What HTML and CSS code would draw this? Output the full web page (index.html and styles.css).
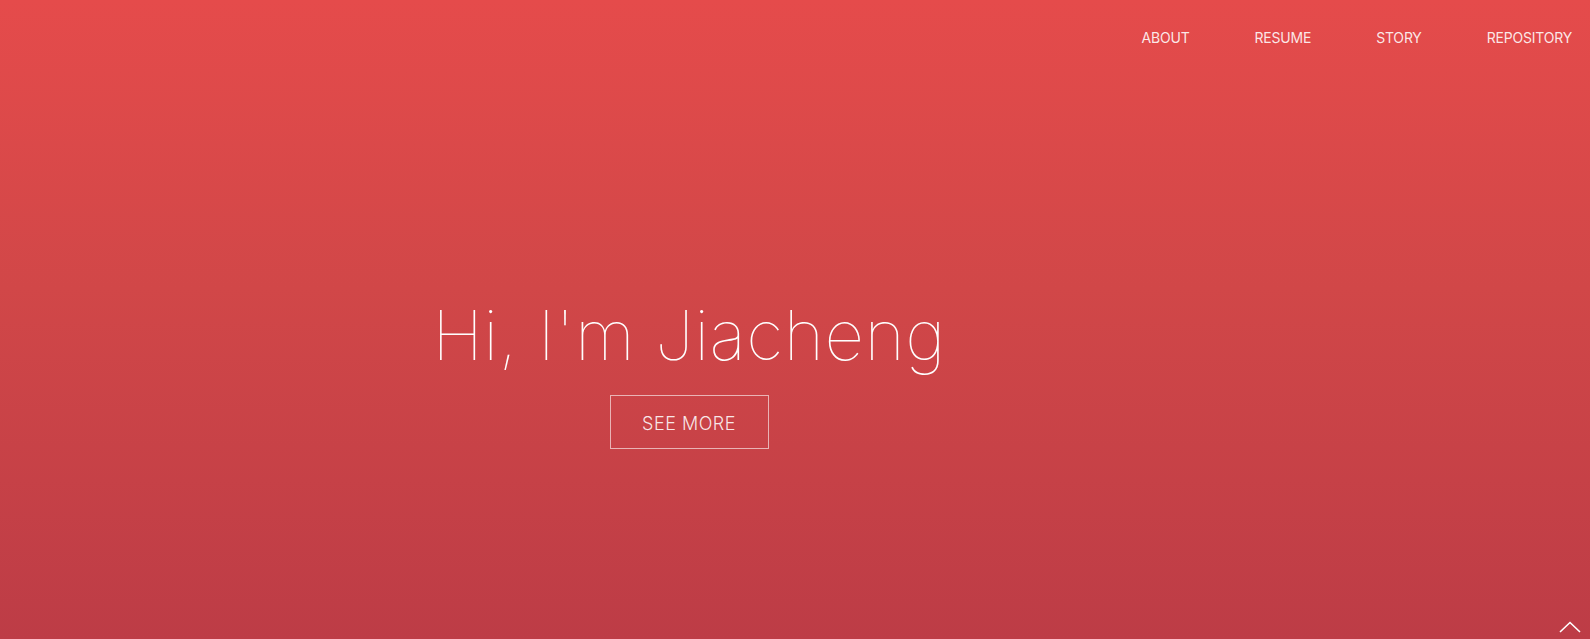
FILE: index.html
```html
<!DOCTYPE html>
<html lang="en">
<head>
<meta charset="utf-8">
<title>Jiacheng</title>
<link rel="stylesheet" href="styles.css">
</head>
<body>
<div class="page">
  <nav class="nav">
    <a href="#" class="nav-link">ABOUT</a>
    <a href="#" class="nav-link">RESUME</a>
    <a href="#" class="nav-link">STORY</a>
    <a href="#" class="nav-link">REPOSITORY</a>
  </nav>
  <main class="hero">
    <h1 class="title">Hi, I'm Jiacheng</h1>
    <a href="#" class="btn">SEE MORE</a>
  </main>
  <a href="#" class="to-top" aria-label="Back to top">
    <svg width="22" height="12" viewBox="0 0 22 12"><path d="M1 11 L11 1.5 L21 11" fill="none" stroke="#fff" stroke-width="1.6"/></svg>
  </a>
</div>
</body>
</html>
```
FILE: styles.css
```css
* { box-sizing: border-box; }
html, body { margin: 0; height: 100%; }
body {
  font-family: "Inter", "Liberation Sans", sans-serif;
  color: #fff;
  overflow: hidden;
}
.page {
  position: relative;
  height: 639px;
  background: linear-gradient(180deg, #e54b4b 0%, #d14748 45%, #bd3c46 100%);
  display: flex;
  flex-direction: column;
}
.nav {
  display: flex;
  justify-content: flex-end;
  gap: 65px;
  padding: 29px 18px 0 0;
  height: 60px;
}
.nav-link {
  color: rgba(255,255,255,0.88);
  text-decoration: none;
  font-size: 14px;
  letter-spacing: -0.2px;
  line-height: 18px;
}
.hero {
  flex: 1;
  display: flex;
  flex-direction: column;
  align-items: center;
  padding: 235px 212px 0 0;
}
.title {
  margin: 0;
  font-weight: 100;
  font-size: 69px;
  line-height: 80px;
  letter-spacing: 0.5px;
}
.btn {
  margin-top: 20px;
  width: 159px;
  height: 54px;
  padding-top: 3px;
  border: 1px solid rgba(255,255,255,0.6);
  display: flex;
  align-items: center;
  justify-content: center;
  color: rgba(255,255,255,0.88);
  text-decoration: none;
  font-size: 18px;
  font-weight: 300;
  letter-spacing: 0.5px;
}
.to-top {
  position: absolute;
  right: 9px;
  bottom: 6px;
  display: block;
  line-height: 0;
}
```
